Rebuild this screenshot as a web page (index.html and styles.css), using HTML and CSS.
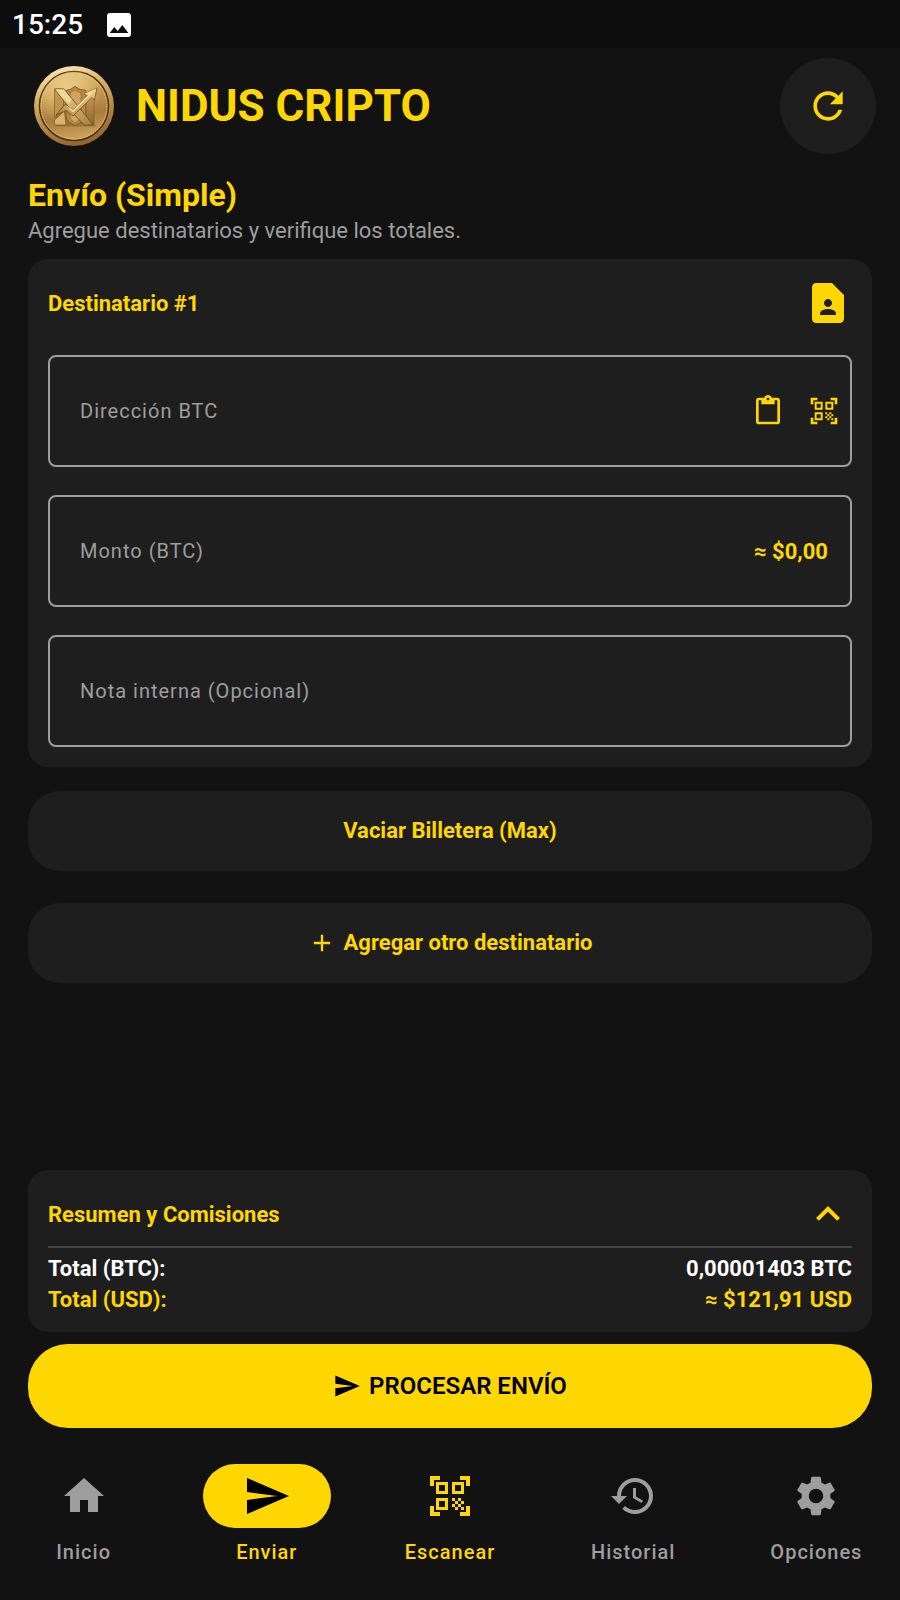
FILE: index.html
```html
<!DOCTYPE html>
<html lang="es">
<head>
<meta charset="utf-8">
<meta name="viewport" content="width=device-width, initial-scale=1">
<title>Nidus Cripto</title>
<link rel="stylesheet" href="styles.css">
</head>
<body>
<svg class="sprite" aria-hidden="true">
  <symbol id="qr" viewBox="0 0 24 24"><path d="M9.5 6.5v3h-3v-3h3M11 5H5v6h6V5zm-1.5 9.500v3h-3v-3h3M11 13H5v6h6v-6zm6.500-6.500v3h-3v-3h3M19 5h-6v6h6V5zm-6 8h1.500v1.500H13V13zm1.500 1.500H16V16h-1.500v-1.500zM16 13h1.500v1.500H16V13zm-3 3h1.500v1.500H13V16zm1.500 1.500H16V19h-1.500v-1.500zM16 16h1.500v1.500H16V16zm1.500-1.500H19V16h-1.500v-1.500zm0 3H19V19h-1.500v-1.500zM22 7h-2V4h-3V2h5v5zm0 15v-5h-2v3h-3v2h5zM2 22h5v-2H4v-3H2v5zM2 2v5h2V4h3V2H2z"/></symbol>
  <symbol id="send" viewBox="0 0 24 24"><path d="M2.010 21L23 12 2.010 3 2 10l15 2-15 2z"/></symbol>
</svg>

<div class="status">
  <span>15:25</span>
  <svg class="icon icon-s" viewBox="0 0 24 24" aria-hidden="true"><path d="M21 19V5c0-1.100-.9-2-2-2H5c-1.100 0-2 .9-2 2v14c0 1.100.9 2 2 2h14c1.100 0 2-.9 2-2zM8.500 13.500l2.500 3.010L14.500 12l4.500 6H5l3.500-4.500z"/></svg>
</div>

<header class="header">
  <svg class="coin" viewBox="0 0 80 80" role="img" aria-label="Nidus Cripto">
    <defs>
      <linearGradient id="rim" x1="0.3" y1="0" x2="0.6" y2="1">
        <stop offset="0" stop-color="#fbe9b8"/><stop offset="0.3" stop-color="#d9b46c"/>
        <stop offset="0.6" stop-color="#b98d4c"/><stop offset="1" stop-color="#8f6230"/>
      </linearGradient>
      <linearGradient id="face" x1="0.4" y1="0" x2="0.6" y2="1">
        <stop offset="0" stop-color="#e0bf78"/><stop offset="0.35" stop-color="#c69a50"/>
        <stop offset="0.65" stop-color="#a87c3d"/><stop offset="1" stop-color="#d2a75f"/>
      </linearGradient>
      <radialGradient id="glow" cx="0.4" cy="0.25" r="0.5">
        <stop offset="0" stop-color="#f2d68f" stop-opacity="0.8"/><stop offset="1" stop-color="#f2d68f" stop-opacity="0"/>
      </radialGradient>
      <linearGradient id="bar" x1="0" y1="0" x2="0" y2="1">
        <stop offset="0" stop-color="#c99d55"/><stop offset="1" stop-color="#8d642d"/>
      </linearGradient>
      <linearGradient id="diagonal" x1="0" y1="0" x2="1" y2="1">
        <stop offset="0" stop-color="#f6dd9c"/><stop offset="1" stop-color="#a87a3c"/>
      </linearGradient>
      <linearGradient id="arrow" x1="0" y1="1" x2="1" y2="0">
        <stop offset="0" stop-color="#b98b46"/><stop offset="1" stop-color="#f0d18a"/>
      </linearGradient>
    </defs>
    <circle cx="40" cy="40" r="40" fill="url(#rim)"/>
    <circle cx="40" cy="40" r="34.500" fill="url(#face)" stroke="#50330f" stroke-width="1.500"/>
    <circle cx="40" cy="40" r="34.500" fill="url(#glow)"/>
    <circle cx="40" cy="40" r="33" fill="none" stroke="#edd191" stroke-width="0.800" stroke-dasharray="1.500 1"/>
    <path d="M21.500 24.500h8l33 36h-41z" fill="#7c5626" opacity="0.450"/>
    <path d="M41 20.500l4 2.500 7 1.500v26c-2 5-7 7-11 9-4-2-8-4-9-9v-26l5-1.500z" fill="#b78945" stroke="#76501f" stroke-width="0.800"/>
    <path d="M41 24l6 3v26l-6 4-5-4V27z" fill="#cfa45b" stroke="#8c6431" stroke-width="0.600"/>
    <path d="M20.500 23h9v17l-9 12z" fill="#c0944d" stroke="#76501f" stroke-width="0.600"/>
    <path d="M52 37l8-8v30l-8-7z" fill="url(#bar)" stroke="#76501f" stroke-width="0.600"/>
    <path d="M20.500 59V54l10-9 1.500 14z" fill="#d9b36a" stroke="#6b481d" stroke-width="0.600"/>
    <path d="M20.500 23h9.500l29.500 36h-9.500L40 48z" fill="url(#diagonal)" stroke="#5f3f18" stroke-width="0.700"/>
    <path d="M21.500 23.500h8l8 10-2.500 4.500z" fill="#f3d894"/>
    <path d="M22 49l9-10.500 8 5.500 15-15-4-1L63 22l-2.500 12-2.500-2.500L39 50l-7-5.500z" fill="url(#arrow)" stroke="#5f3f18" stroke-width="0.700"/>
    <path d="M31 38.500l8 5.500 15-15-4-1L63 22 39 46.500z" fill="#f5dc9a"/>
  </svg>
  <p class="brand">NIDUS CRIPTO</p>
  <button class="refresh" type="button" aria-label="Actualizar">
    <svg class="icon icon-m" viewBox="0 0 24 24" aria-hidden="true"><path d="M17.650 6.350C16.200 4.900 14.210 4 12 4c-4.420 0-7.990 3.580-7.990 8s3.570 8 7.990 8c3.730 0 6.840-2.550 7.730-6h-2.080c-.82 2.330-3.040 4-5.650 4-3.310 0-6-2.690-6-6s2.690-6 6-6c1.660 0 3.140.69 4.220 1.780L13 11h7V4l-2.350 2.350z"/></svg>
  </button>
</header>

<main class="main">
  <h1>Envío (Simple)</h1>
  <p class="subtitle">Agregue destinatarios y verifique los totales.</p>

  <section class="card recipient">
    <div class="card-head">
      <h2>Destinatario #1</h2>
      <button type="button" aria-label="Contactos"><svg class="icon icon-l" viewBox="0 0 24 24" aria-hidden="true"><path d="M14 2H6c-1.100 0-1.990.9-1.990 2L4 20c0 1.100.89 2 1.990 2H18c1.100 0 2-.9 2-2V8l-6-6zm-2 8c1.100 0 2 .9 2 2s-.9 2-2 2-2-.9-2-2 .9-2 2-2zm4 8H8v-.57c0-.81.48-1.530 1.220-1.850.85-.37 1.790-.58 2.780-.58.99 0 1.930.21 2.780.58.74.32 1.220 1.040 1.220 1.850V18z"/></svg></button>
    </div>
    <div class="field field-icons">
      <label for="address">Dirección BTC</label>
      <input id="address" type="text">
      <button type="button" aria-label="Pegar"><svg class="icon icon-s" viewBox="0 0 24 24" aria-hidden="true"><path d="M19 2h-4.180C14.400.84 13.300 0 12 0c-1.300 0-2.400.84-2.820 2H5c-1.100 0-2 .9-2 2v16c0 1.100.9 2 2 2h14c1.100 0 2-.9 2-2V4c0-1.100-.9-2-2-2zm-7 0c.55 0 1 .45 1 1s-.45 1-1 1-1-.45-1-1 .45-1 1-1zm7 18H5V4h2v3h10V4h2v16z"/></svg></button>
      <button type="button" aria-label="Escanear código"><svg class="icon icon-s" aria-hidden="true"><use href="#qr"/></svg></button>
    </div>
    <div class="field">
      <label for="amount">Monto (BTC)</label>
      <input id="amount" type="text" inputmode="decimal">
      <output for="amount">≈ $0,00</output>
    </div>
    <div class="field">
      <label for="note">Nota interna (Opcional)</label>
      <input id="note" type="text">
    </div>
  </section>

  <div class="actions">
    <button class="action" type="button">Vaciar Billetera (Max)</button>
    <button class="action" type="button"><svg class="icon icon-xs" viewBox="0 0 24 24" aria-hidden="true"><path d="M19 13h-6v6h-2v-6H5v-2h6V5h2v6h6v2z"/></svg>Agregar otro destinatario</button>
  </div>

  <section class="card summary">
    <div class="card-head">
      <h2>Resumen y Comisiones</h2>
      <button type="button" aria-label="Mostrar detalle"><svg class="icon icon-l" viewBox="0 0 24 24" aria-hidden="true"><path d="M12 8l-6 6 1.410 1.410L12 10.830l4.590 4.580L18 14z"/></svg></button>
    </div>
    <dl class="totals">
      <div class="total"><dt>Total (BTC):</dt><dd>0,00001403 BTC</dd></div>
      <div class="total total-usd"><dt>Total (USD):</dt><dd>≈ $121,91 USD</dd></div>
    </dl>
  </section>
  <button class="process" type="button"><svg class="icon icon-xs" aria-hidden="true"><use href="#send"/></svg>PROCESAR ENVÍO</button>
</main>

<nav class="nav">
  <a href="#inicio"><span class="pill"><svg class="icon icon-l" viewBox="0 0 24 24" aria-hidden="true"><path d="M10 20v-6h4v6h5v-8h3L12 3 2 12h3v8z"/></svg></span>Inicio</a>
  <a class="gold active" href="#enviar" aria-current="page"><span class="pill"><svg class="icon icon-l" aria-hidden="true"><use href="#send"/></svg></span>Enviar</a>
  <a class="gold" href="#escanear"><span class="pill"><svg class="icon icon-l" aria-hidden="true"><use href="#qr"/></svg></span>Escanear</a>
  <a href="#historial"><span class="pill"><svg class="icon icon-l" viewBox="0 0 24 24" aria-hidden="true"><path d="M13 3c-4.970 0-9 4.030-9 9H1l3.890 3.890.07.14L9 12H6c0-3.870 3.130-7 7-7s7 3.130 7 7-3.130 7-7 7c-1.930 0-3.680-.79-4.940-2.060l-1.420 1.420C8.270 19.990 10.510 21 13 21c4.970 0 9-4.030 9-9s-4.030-9-9-9zm-1 5v5l4.280 2.540.72-1.210-3.500-2.080V8H12z"/></svg></span>Historial</a>
  <a href="#opciones"><span class="pill"><svg class="icon icon-l" viewBox="0 0 24 24" aria-hidden="true"><path d="M19.140 12.940c.04-.3.06-.61.06-.94 0-.32-.02-.64-.07-.94l2.030-1.580c.18-.14.23-.41.12-.61l-1.920-3.320c-.12-.22-.37-.29-.59-.22l-2.390.96c-.5-.38-1.030-.7-1.620-.94l-.36-2.540c-.04-.24-.24-.41-.48-.41h-3.840c-.24 0-.43.17-.47.41l-.36 2.540c-.59.24-1.130.57-1.620.94l-2.390-.96c-.22-.08-.47 0-.59.22L2.740 8.870c-.12.21-.08.47.12.61l2.030 1.580c-.05.3-.09.63-.09.94s.02.64.07.94l-2.030 1.580c-.18.14-.23.41-.12.61l1.920 3.320c.12.22.37.29.59.22l2.390-.96c.5.38 1.030.7 1.620.94l.36 2.540c.05.24.24.41.48.41h3.840c.24 0 .44-.17.47-.41l.36-2.540c.59-.24 1.130-.56 1.620-.94l2.390.96c.22.08.47 0 .59-.22l1.920-3.320c.12-.22.07-.47-.12-.61l-2.010-1.580zM12 15.600c-1.980 0-3.600-1.620-3.600-3.600s1.620-3.600 3.600-3.600 3.600 1.620 3.600 3.600-1.620 3.600-3.600 3.600z"/></svg></span>Opciones</a>
</nav>
</body>
</html>
```

FILE: styles.css
```css
:root {
  --bg: #121212;
  --surface: #1e1e1e;
  --gold: #ffd700;
  --muted: #9e9e9e;
}

* {
  box-sizing: border-box;
}

body {
  margin: 0;
  min-height: 100vh;
  display: flex;
  flex-direction: column;
  background: var(--bg);
  color: #fff;
  font-family: Roboto, "Liberation Sans", sans-serif;
  font-size: 22px;
  line-height: 26px;
}

h1,
h2,
p,
dl,
dd {
  margin: 0;
}

button {
  display: flex;
  align-items: center;
  justify-content: center;
  padding: 0;
  border: 0;
  background: none;
  color: var(--gold);
  font: inherit;
  font-weight: 700;
  cursor: pointer;
}

.sprite {
  position: absolute;
  width: 0;
  height: 0;
}

.icon {
  display: block;
  flex: none;
  fill: currentColor;
}

.icon-xs {
  width: 28px;
  height: 28px;
}

.icon-s {
  width: 32px;
  height: 32px;
}

.icon-m {
  width: 44px;
  height: 44px;
}

.icon-l {
  width: 48px;
  height: 48px;
}

.status {
  display: flex;
  align-items: center;
  gap: 20px;
  height: 48px;
  padding: 2px 12px 0;
  background: #0d0d0d;
  font-size: 28px;
  font-weight: 500;
}

.header {
  display: flex;
  align-items: center;
  gap: 22px;
  padding: 10px 24px 10px 34px;
}

.coin {
  width: 80px;
  height: 80px;
}

.brand {
  flex: 1;
  color: var(--gold);
  font-size: 44px;
  font-weight: 700;
  line-height: 52px;
}

.refresh {
  width: 96px;
  height: 96px;
  border-radius: 50%;
  background: var(--surface);
}

.main {
  flex: 1;
  display: flex;
  flex-direction: column;
  padding: 12px 28px 0;
}

h1 {
  color: var(--gold);
  font-size: 32px;
  font-weight: 700;
  line-height: 38px;
}

h2 {
  padding-top: 2px;
  color: var(--gold);
  font-size: 22px;
  font-weight: 700;
}

.subtitle {
  margin-bottom: 11px;
  color: var(--muted);
  line-height: 34px;
}

.card {
  padding: 20px;
  border-radius: 20px;
  background: var(--surface);
}

.card-head {
  display: flex;
  align-items: center;
  justify-content: space-between;
}

.recipient {
  display: flex;
  flex-direction: column;
  gap: 28px;
}

.field {
  display: flex;
  align-items: center;
  gap: 24px;
  height: 112px;
  padding: 0 22px 0 30px;
  border: 2px solid var(--muted);
  border-radius: 8px;
}

.field-icons {
  padding-right: 10px;
}

.field label {
  color: var(--muted);
  font-size: 20px;
  letter-spacing: 1px;
}

.field input {
  flex: 1;
  min-width: 0;
  height: 100%;
  padding: 0;
  border: 0;
  outline: 0;
  background: none;
  color: #fff;
  font: inherit;
}

.field output {
  padding-top: 2px;
  color: var(--gold);
  font-weight: 700;
}

.actions {
  display: flex;
  flex-direction: column;
  gap: 32px;
  margin: 24px 0;
}

.action {
  gap: 8px;
  height: 80px;
  border-radius: 32px;
  background: var(--surface);
}

.summary {
  margin-top: auto;
}

.totals {
  display: flex;
  flex-direction: column;
  gap: 6px;
  margin-top: 8px;
  padding-top: 8px;
  border-top: 2px solid #444;
  font-weight: 700;
  line-height: 25px;
}

.total {
  display: flex;
  justify-content: space-between;
}

.total-usd {
  color: var(--gold);
}

.process {
  gap: 8px;
  height: 84px;
  margin-top: 12px;
  border-radius: 40px;
  background: var(--gold);
  color: #000;
  font-size: 24px;
  font-weight: 600;
}

.nav {
  display: grid;
  grid-template-columns: repeat(5, 1fr);
  gap: 16px;
  padding: 36px 0;
}

.nav a {
  display: flex;
  flex-direction: column;
  align-items: center;
  gap: 12px;
  color: var(--muted);
  font-size: 20px;
  font-weight: 500;
  line-height: 24px;
  letter-spacing: 1px;
  text-decoration: none;
}

.nav .gold {
  color: var(--gold);
}

.pill {
  display: grid;
  place-items: center;
  width: 128px;
  height: 64px;
  border-radius: 32px;
}

.active .pill {
  background: var(--gold);
  color: #000;
}
```
